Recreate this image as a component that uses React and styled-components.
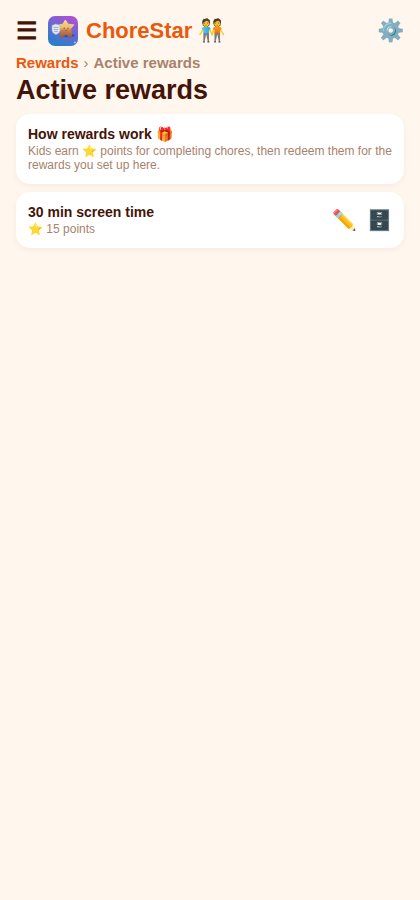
import React from "react";
import styled, { createGlobalStyle } from "styled-components";

const rewards = [{ id: 1, name: "30 min screen time", points: 15 }];

const App = () => {
  return (
    <>
      <GlobalStyle />
      <Page>
        <Header>
          <MenuButton type="button" aria-label="Menu">
            ☰
          </MenuButton>
          <BrandGroup>
            <Logo />
            <Brand>ChoreStar 🧑‍🤝‍🧑</Brand>
          </BrandGroup>
          <IconButton type="button" aria-label="Settings">
            ⚙️
          </IconButton>
        </Header>
        <Breadcrumb aria-label="Breadcrumb">
          <CrumbLink href="#rewards">Rewards</CrumbLink>
          <Separator>›</Separator>
          <Crumb>Active rewards</Crumb>
        </Breadcrumb>
        <Title>Active rewards</Title>
        <CardList>
          <Card>
            <CardBody>
              <CardTitle>How rewards work 🎁</CardTitle>
              <CardText>
                Kids earn ⭐ points for completing chores, then redeem them for
                the rewards you set up here.
              </CardText>
            </CardBody>
          </Card>
          {rewards.map((reward) => (
            <Card key={reward.id}>
              <CardBody>
                <CardTitle>{reward.name}</CardTitle>
                <CardText>⭐ {reward.points} points</CardText>
              </CardBody>
              <Actions>
                <IconButton type="button" aria-label="Edit reward" $small>
                  ✏️
                </IconButton>
                <IconButton type="button" aria-label="Archive reward" $small>
                  🗄️
                </IconButton>
              </Actions>
            </Card>
          ))}
        </CardList>
      </Page>
    </>
  );
};

const Logo = () => (
  <LogoSvg viewBox="0 0 30 30" role="img" aria-label="ChoreStar logo">
    <defs>
      <linearGradient id="logoSky" x1="0.75" y1="0" x2="0.3" y2="1">
        <stop offset="0" stopColor="#b04fd8" />
        <stop offset="0.45" stopColor="#6a68d0" />
        <stop offset="1" stopColor="#2580c8" />
      </linearGradient>
      <linearGradient id="logoStar" x1="0" y1="0" x2="0" y2="1">
        <stop offset="0" stopColor="#fbdc84" />
        <stop offset="0.45" stopColor="#ecbd70" />
        <stop offset="0.6" stopColor="#c88150" />
        <stop offset="1" stopColor="#a0583a" />
      </linearGradient>
    </defs>
    <rect width="30" height="30" rx="7" fill="url(#logoSky)" />
    <ellipse cx="20" cy="19.5" rx="7" ry="1.8" fill="#2f3f8e" opacity="0.6" />
    <path
      d="M17.4 4 20 8.2 25.8 8.8 22.8 12.6 23.6 20.4 20.6 21 19.4 18.4 16.4 18.6 15.4 21.2 12.6 20.6 12.4 13.6 9.6 9.2 14.8 8.2Z"
      fill="url(#logoStar)"
      stroke="url(#logoStar)"
      strokeWidth="1"
      strokeLinejoin="round"
    />
    <path
      d="M4 9.4 7.8 8 12 9.4V14.6Q11.6 17.4 8 18.6 4.4 17.4 4 14.6Z"
      fill="#e3e9f1"
      stroke="#a3b1ca"
      strokeWidth="0.6"
    />
    <path
      d="M5.6 11.4h4.8M5.6 13.4h4.8M6 15.4h4"
      stroke="#8397b8"
      strokeWidth="0.7"
    />
    <circle cx="16.2" cy="12.2" r="0.6" fill="#5e3a2b" />
    <circle cx="20" cy="12.2" r="0.6" fill="#5e3a2b" />
    <path
      d="M17 14q1.2 1 2.4 0"
      fill="none"
      stroke="#8b4935"
      strokeWidth="0.6"
    />
    <path
      d="m27 24.8.4 1.2 1.2.4-1.2.4-.4 1.2-.4-1.2-1.2-.4 1.2-.4Z"
      fill="#c8e4fa"
    />
  </LogoSvg>
);

export default App;

const GlobalStyle = createGlobalStyle`
  * {
    box-sizing: border-box;
  }

  body {
    margin: 0;
    background-color: #fff6ed;
    color: #431407;
    font-family: "Liberation Sans", Arial, sans-serif;
  }
`;

const Page = styled.main`
  min-height: 100vh;
  padding: 16px;
`;

const Header = styled.header`
  display: flex;
  align-items: center;
  gap: 10px;
  height: 30px;
  margin-bottom: 8px;
`;

const MenuButton = styled.button`
  padding: 0;
  border: none;
  background: none;
  color: #431407;
  font-family: inherit;
  font-size: 24px;
  font-weight: bold;
  line-height: 30px;
  cursor: pointer;
`;

const BrandGroup = styled.div`
  display: flex;
  flex: 1;
  align-items: center;
  gap: 8px;
`;

const LogoSvg = styled.svg`
  display: block;
  flex: none;
  width: 30px;
  height: 30px;
`;

const Brand = styled.span`
  color: #ea580c;
  font-size: 22px;
  font-weight: bold;
  line-height: 30px;
  white-space: nowrap;
`;

const IconButton = styled.button`
  padding: 0;
  border: none;
  background: none;
  font-family: inherit;
  font-size: ${({ $small }) => ($small ? "20px" : "22px")};
  line-height: 24px;
  cursor: pointer;
`;

const Breadcrumb = styled.nav`
  display: flex;
  align-items: center;
  gap: 5px;
  font-size: 15px;
  font-weight: bold;
  line-height: 18px;
`;

const CrumbLink = styled.a`
  color: #ea580c;
  text-decoration: none;
`;

const Separator = styled.span`
  color: #a8826b;
  font-weight: normal;
`;

const Crumb = styled.span`
  color: #a8826b;
`;

const Title = styled.h1`
  margin: 2px 0 8px;
  font-size: 27px;
  font-weight: bold;
  line-height: 32px;
`;

const CardList = styled.div`
  display: flex;
  flex-direction: column;
  gap: 8px;
`;

const Card = styled.section`
  display: flex;
  align-items: center;
  gap: 12px;
  padding: 12px;
  border-radius: 14px;
  background-color: #ffffff;
  box-shadow: 0 2px 6px rgba(67, 20, 7, 0.05);
`;

const CardBody = styled.div`
  display: flex;
  flex: 1;
  flex-direction: column;
  gap: 2px;
  min-width: 0;
`;

const CardTitle = styled.h2`
  margin: 0;
  font-size: 14px;
  font-weight: bold;
  line-height: 16px;
`;

const CardText = styled.p`
  margin: 0;
  color: #a8826b;
  font-size: 12px;
  line-height: 14px;
`;

const Actions = styled.div`
  display: flex;
  align-items: center;
  gap: 10px;
`;
